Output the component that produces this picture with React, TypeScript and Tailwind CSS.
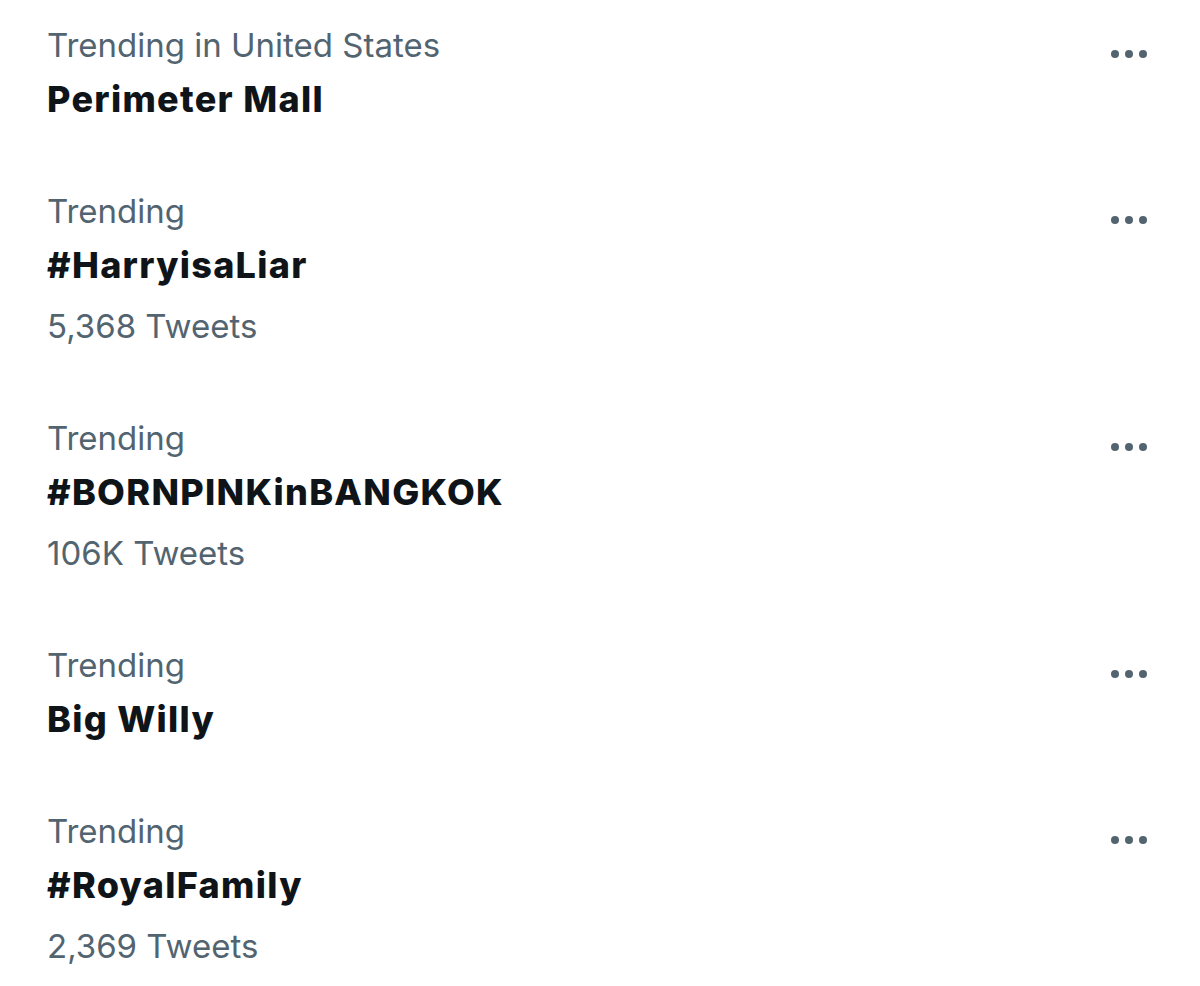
import React from "react";

type Trend = { label: string; title: string; count?: string };

const trends: Trend[] = [
  { label: "Trending in United States", title: "Perimeter Mall" },
  { label: "Trending", title: "#HarryisaLiar", count: "5,368 Tweets" },
  { label: "Trending", title: "#BORNPINKinBANGKOK", count: "106K Tweets" },
  { label: "Trending", title: "Big Willy" },
  { label: "Trending", title: "#RoyalFamily", count: "2,369 Tweets" },
];

function Dots() {
  return (
    <div className="flex items-center gap-[6px]">
      <span className="block h-[8px] w-[8px] rounded-full bg-[#536471]" />
      <span className="block h-[8px] w-[8px] rounded-full bg-[#536471]" />
      <span className="block h-[8px] w-[8px] rounded-full bg-[#536471]" />
    </div>
  );
}

export default function App() {
  return (
    <div
      className="min-h-[986px] w-[1200px] bg-white"
      style={{ fontFamily: "Inter, 'Noto Sans', sans-serif" }}
    >
      {trends.map((t, i) => (
        <div key={i} className="flex items-start justify-between pl-[47px] pr-[53px] pt-[19px] pb-[39px]">
          <div className="flex flex-col">
            <div className="text-[33px] leading-[52px] text-[#536471]">{t.label}</div>
            <div className="text-[36px] leading-[56px] font-extrabold tracking-[1.3px] text-[#0f1419]">{t.title}</div>
            {t.count && (
              <div className="mt-[5px] text-[33px] leading-[56px] text-[#536471]">{t.count}</div>
            )}
          </div>
          <div className="mt-[31px]">
            <Dots />
          </div>
        </div>
      ))}
    </div>
  );
}
